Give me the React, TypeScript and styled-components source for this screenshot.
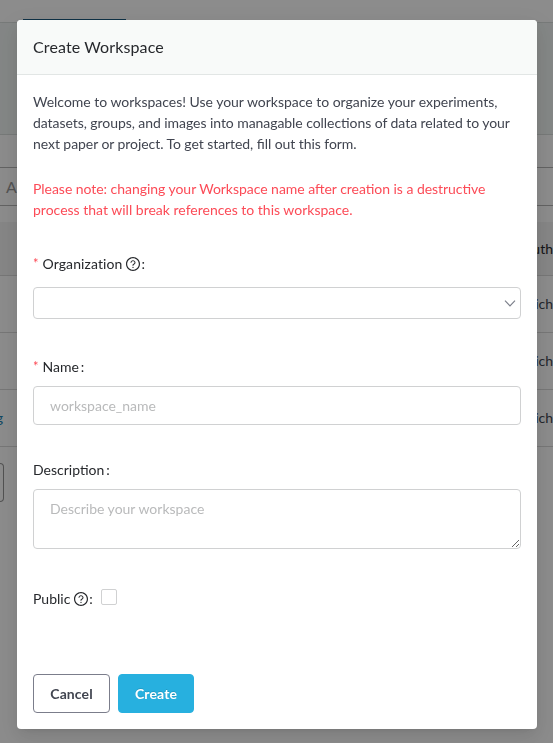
import React from "react";
import styled, { createGlobalStyle, css } from "styled-components";

const GlobalStyle = createGlobalStyle`
  *, *::before, *::after { box-sizing: border-box; }
  body {
    margin: 0;
    overflow: hidden;
    background: #fff;
    color: #414550;
    font: 14px/21px Lato, "Open Sans", sans-serif;
  }
`;

/* Workspace list behind the dialog */
const Page = styled.div`
  height: 743px;
  width: 553px;
  overflow: hidden;
`;
const TabBar = styled.div`
  height: 23px;
  padding: 19px 0 0 23px;
  border-bottom: 1px solid #d9dedc;
`;
const ActiveTab = styled.div`
  width: 103px;
  height: 3px;
  background: #1c5a80;
`;
const Banner = styled.div`
  height: 112px;
  background: #f1f5f4;
  border-bottom: 1px solid #d9dedc;
`;
const FilterRow = styled.div`
  height: 87px;
  padding-top: 32px;
`;
const Filter = styled.div`
  height: 39px;
  padding: 0 6px;
  border: solid #b4b4b4;
  border-width: 1px 0;
  color: #999;
  font-size: 16px;
  line-height: 37px;
`;
const TableRow = styled.div<{ $head?: boolean }>`
  display: flex;
  justify-content: space-between;
  align-items: center;
  height: ${(p) => (p.$head ? 54 : 57)}px;
  padding-bottom: ${(p) => (p.$head ? 0 : 2)}px;
  background: ${(p) => (p.$head ? "#f4f4f4" : "#fff")};
  border-bottom: 1px solid #d9d9d9;
  color: ${(p) => (p.$head ? "#26282c" : "#414550")};
`;
const RowLink = styled.span`
  display: flex;
  justify-content: flex-end;
  width: 3px;
  color: #1d82b2;
`;
const Author = styled.span`
  width: 17px;
  white-space: nowrap;
  display: flex;
  justify-content: flex-end;
`;
const Pager = styled.div`
  width: 4px;
  height: 39px;
  margin-top: 16px;
  border: 1px solid #969696;
  border-left: 0;
  border-radius: 0 4px 4px 0;
`;

/* Dialog */
const Mask = styled.div`
  position: fixed;
  inset: 0;
  padding: 20px 16px 0 17px;
  background: rgba(0, 0, 0, 0.45);
`;
const Dialog = styled.section`
  display: flex;
  flex-direction: column;
  height: 709px;
  background: #fff;
  border-radius: 4px;
  overflow: hidden;
  box-shadow: 0 3px 6px -4px rgba(0, 0, 0, 0.12), 0 6px 16px rgba(0, 0, 0, 0.08),
    0 9px 28px 8px rgba(0, 0, 0, 0.05);
`;
const Header = styled.header`
  height: 55px;
  padding: 16px;
  background: #f8faf9;
  border-bottom: 1px solid #e2e6e5;
`;
const Title = styled.h1`
  margin: 0;
  color: #26282c;
  font-size: 16px;
  font-weight: 400;
  line-height: 22px;
  letter-spacing: 0.12px;
`;
const Form = styled.form`
  display: flex;
  flex: 1;
  flex-direction: column;
  padding: 16px;
`;
const Paragraph = styled.p<{ $warning?: boolean }>`
  margin: 0 0 ${(p) => (p.$warning ? 33 : 24)}px;
  color: ${(p) => (p.$warning ? "#fc4b57" : "#414550")};
`;
const Line = styled.span<{ $tracking?: number }>`
  display: block;
  white-space: nowrap;
  letter-spacing: ${(p) => p.$tracking ?? 0}px;
  font-feature-settings: "liga" 1;
`;
const Field = styled.div<{ $height: number }>`
  height: ${(p) => p.$height}px;
`;
const Label = styled.label`
  display: flex;
  align-items: center;
  height: 21px;
  color: #26282c;
`;
const Required = styled.span`
  width: 9.5px;
  color: #fc4b57;
  font-size: 13px;
`;
const Colon = styled.span<{ $gap: number }>`
  margin-left: ${(p) => p.$gap}px;
`;
const HelpSvg = styled.svg`
  margin-left: 4px;
`;
const LabelText = styled.span<{ $tracking?: number }>`
  letter-spacing: ${(p) => p.$tracking ?? 0}px;
`;
const outline = css`
  display: block;
  width: 100%;
  border: 1px solid #d0d1d2;
  border-radius: 4px;
  background: #fff;
`;
const SelectBox = styled.div`
  ${outline}
  display: flex;
  align-items: center;
  justify-content: flex-end;
  height: 32px;
  margin-top: 13px;
  padding-right: 3px;
`;
const fieldText = css`
  ${outline}
  padding: 8px 16px;
  color: #414550;
  font: inherit;
  outline: 0;
  &::placeholder { color: #b9babb; opacity: 1; }
`;
const Input = styled.input`
  ${fieldText}
  height: 39px;
  margin-top: 9px;
`;
const TextArea = styled.textarea`
  ${fieldText}
  height: 60px;
  margin-top: 9px;
  resize: vertical;
`;
const CheckRow = styled.div`
  display: flex;
  align-items: flex-start;
`;
const CheckBox = styled.input`
  appearance: none;
  width: 16px;
  height: 16px;
  margin: 1px 0 0 8px;
  border: 1px solid #d0d1d2;
  border-radius: 2px;
  background: #fff;
`;
const Actions = styled.footer`
  display: flex;
  gap: 8px;
  margin-top: auto;
`;
const Button = styled.button<{ $primary?: boolean }>`
  width: ${(p) => (p.$primary ? 76 : 77)}px;
  height: 39px;
  padding: 0;
  border: 1px solid ${(p) => (p.$primary ? "#27b0df" : "#7b7d8b")};
  border-radius: 4px;
  background: ${(p) => (p.$primary ? "#27b0df" : "#fff")};
  color: ${(p) => (p.$primary ? "#fff" : "#414550")};
  font: bold 14px/21px Lato, "Open Sans", sans-serif;
  letter-spacing: 0.1px;
  text-shadow: ${(p) => (p.$primary ? "0 -1px 0 rgba(0, 0, 0, 0.12)" : "none")};
`;

const HelpIcon = () => (
  <HelpSvg width="14" height="14" viewBox="64 64 896 896" fill="currentColor">
    <path d="M512 64C264.6 64 64 264.6 64 512s200.6 448 448 448 448-200.6 448-448S759.4 64 512 64zm0 820c-205.4 0-372-166.6-372-372s166.6-372 372-372 372 166.6 372 372-166.6 372-372 372z" />
    <path d="M623.6 316.7C593.6 290.4 554 276 512 276s-81.6 14.5-111.6 40.7C369.2 344 352 380.7 352 420v7.6c0 4.4 3.6 8 8 8h48c4.4 0 8-3.6 8-8V420c0-44.1 43.1-80 96-80s96 35.9 96 80c0 31.1-22 59.6-56.1 72.7-21.2 8.1-39.2 22.3-52.1 40.9-13.1 19-19.9 41.8-19.9 64.9V620c0 4.4 3.6 8 8 8h48c4.4 0 8-3.6 8-8v-22.7a48.3 48.3 0 0130.9-44.8c59-22.7 97.1-74.7 97.1-132.5.1-39.3-17.1-76-48.3-103.3zM472 732a40 40 0 1080 0 40 40 0 10-80 0z" />
  </HelpSvg>
);

const Chevron = () => (
  <svg width="14" height="14" viewBox="0 0 14 14" fill="none" stroke="#7d808b" strokeWidth="1.2">
    <path d="M2 4.6 7 9.8l5-5.2" />
  </svg>
);

export default function App() {
  return (
    <>
      <GlobalStyle />
      <Page>
        <TabBar><ActiveTab /></TabBar>
        <Banner />
        <FilterRow><Filter>A</Filter></FilterRow>
        <TableRow $head><span /><Author>Auth</Author></TableRow>
        <TableRow><span /><Author>Rich</Author></TableRow>
        <TableRow><span /><Author>Rich</Author></TableRow>
        <TableRow><RowLink>g</RowLink><Author>Rich</Author></TableRow>
        <Pager />
      </Page>
      <Mask>
        <Dialog role="dialog" aria-modal="true">
          <Header><Title>Create Workspace</Title></Header>
          <Form>
            <Paragraph>
              <Line $tracking={-0.015}>Welcome to workspaces! Use your workspace to organize your experiments,</Line>
              <Line $tracking={-0.06}>datasets, groups, and images into managable collections of data related to your</Line>
              <Line $tracking={-0.065}>next paper or project. To get started, fill out this form.</Line>
            </Paragraph>
            <Paragraph $warning>
              <Line $tracking={-0.04}>Please note: changing your Workspace name after creation is a destructive</Line>
              <Line>process that will break references to this workspace.</Line>
            </Paragraph>
            <Field $height={103}>
              <Label>
                <Required>*</Required>
                <LabelText $tracking={0.1}>Organization</LabelText>
                <HelpIcon /><Colon $gap={1}>:</Colon>
              </Label>
              <SelectBox><Chevron /></SelectBox>
            </Field>
            <Field $height={103}>
              <Label><Required>*</Required>Name<Colon $gap={2}>:</Colon></Label>
              <Input placeholder="workspace_name" />
            </Field>
            <Field $height={129}>
              <Label>Description<Colon $gap={2}>:</Colon></Label>
              <TextArea placeholder="Describe your workspace" />
            </Field>
            <CheckRow>
              <Label>Public<HelpIcon /><Colon $gap={1}>:</Colon></Label>
              <CheckBox type="checkbox" />
            </CheckRow>
            <Actions>
              <Button type="button">Cancel</Button>
              <Button type="button" $primary>Create</Button>
            </Actions>
          </Form>
        </Dialog>
      </Mask>
    </>
  );
}
